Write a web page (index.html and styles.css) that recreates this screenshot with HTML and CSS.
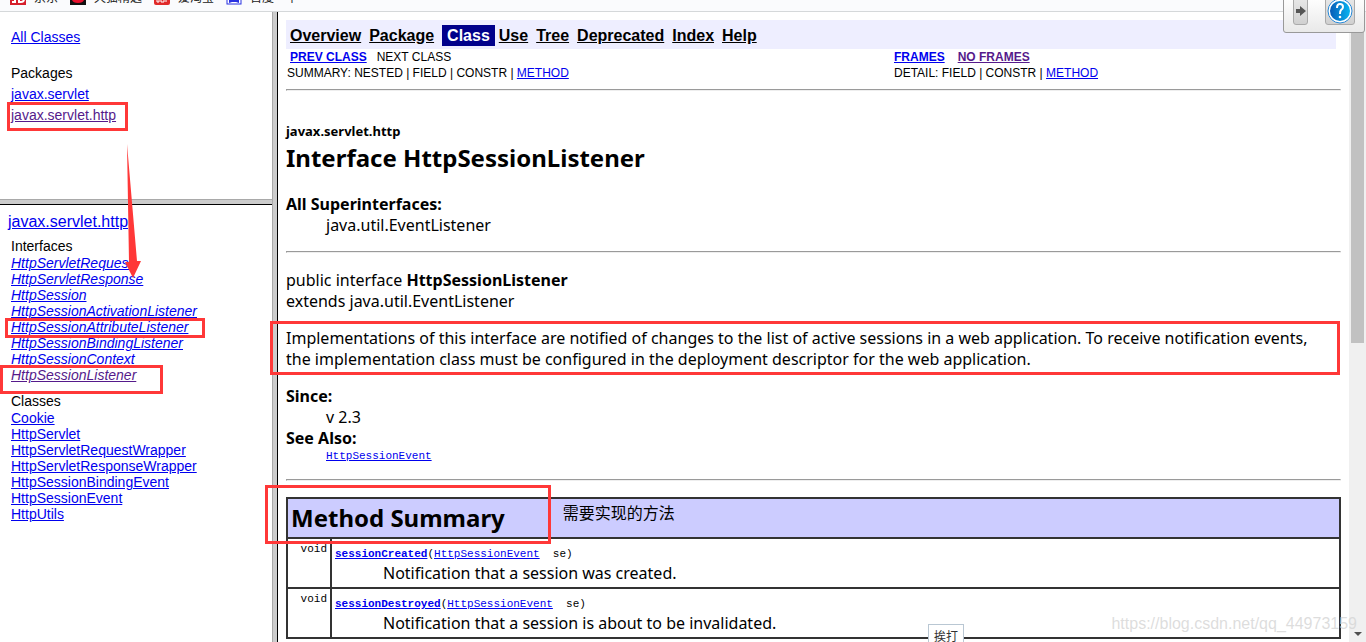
FILE: index.html
```html
<!DOCTYPE html>
<html lang="en">
<head>
<meta charset="utf-8">
<title>HttpSessionListener</title>
<link rel="stylesheet" href="styles.css">
</head>
<body class="browser">
<header class="bookmarks">
  <a class="bookmark" href="#"><svg width="16" height="16" viewBox="0 0 16 16"><rect width="16" height="16" fill="#d6202c"/><path d="M5 8v5H2M9 9v4h2q3 0 3-3" fill="none" stroke="#fff" stroke-width="2"/></svg>京东</a>
  <a class="bookmark" href="#"><svg width="16" height="16" viewBox="0 0 16 16"><rect width="16" height="16" fill="#111"/><path d="M2 7q6 3 12 0v4q-1 3-6 3t-6-3z" fill="#e8102d"/></svg>天猫精选</a>
  <a class="bookmark" href="#"><svg width="16" height="16" viewBox="0 0 16 16"><rect width="16" height="16" rx="2" fill="#e02a2a"/><path d="M3 10v3h2v-3M7 10v3h3v-3zM12 10v3" fill="none" stroke="#fff"/></svg>爱淘宝</a>
  <a class="bookmark" href="#"><svg width="16" height="16" viewBox="0 0 16 16"><rect x="1" y="1" width="14" height="14" fill="#fff" stroke="#2932e1"/><path d="M3 14v-4q5-5 10 0v4l-3-1H6z" fill="#2932e1"/></svg>百度</a>
  <a class="bookmark" href="#">个</a>
</header>
<div class="frames">
  <div class="sidebar">
    <nav class="packages">
      <a class="all" href="#">All Classes</a>
      <h2 class="label">Packages</h2>
      <a href="#">javax.servlet</a>
      <a class="visited" href="#">javax.servlet.http</a>
    </nav>
    <nav class="classes">
      <a class="package-title" href="#">javax.servlet.http</a>
      <h2 class="label">Interfaces</h2>
      <div class="list interfaces">
        <a href="#">HttpServletRequest</a>
        <a href="#">HttpServletResponse</a>
        <a href="#">HttpSession</a>
        <a href="#">HttpSessionActivationListener</a>
        <a href="#">HttpSessionAttributeListener</a>
        <a href="#">HttpSessionBindingListener</a>
        <a href="#">HttpSessionContext</a>
        <a class="visited" href="#">HttpSessionListener</a>
      </div>
      <h2 class="label">Classes</h2>
      <div class="list">
        <a href="#">Cookie</a>
        <a href="#">HttpServlet</a>
        <a href="#">HttpServletRequestWrapper</a>
        <a href="#">HttpServletResponseWrapper</a>
        <a href="#">HttpSessionBindingEvent</a>
        <a href="#">HttpSessionEvent</a>
        <a href="#">HttpUtils</a>
      </div>
    </nav>
  </div>
  <main class="doc">
    <nav class="navbar">
      <a href="#">Overview</a>
      <a href="#">Package</a>
      <span class="current">Class</span>
      <a href="#">Use</a>
      <a href="#">Tree</a>
      <a href="#">Deprecated</a>
      <a href="#">Index</a>
      <a href="#">Help</a>
    </nav>
    <div class="subnav">
      <div>
        <div class="moves"><a href="#">PREV CLASS</a><span>NEXT CLASS</span></div>
        <div>SUMMARY: NESTED | FIELD | CONSTR | <a href="#">METHOD</a></div>
      </div>
      <div>
        <div class="moves frames-links"><a href="#">FRAMES</a><a class="visited" href="#">NO FRAMES</a></div>
        <div>DETAIL: FIELD | CONSTR | <a href="#">METHOD</a></div>
      </div>
    </div>
    <hr>
    <h1 class="title"><span class="title-package">javax.servlet.http</span>Interface HttpSessionListener</h1>
    <dl>
      <dt>All Superinterfaces:</dt>
      <dd>java.util.EventListener</dd>
    </dl>
    <hr>
    <p class="signature">public interface <b>HttpSessionListener</b><br>extends java.util.EventListener</p>
    <p class="description">Implementations of this interface are notified of changes to the list of active sessions in a web application. To receive notification events, the implementation class must be configured in the deployment descriptor for the web application.</p>
    <dl>
      <dt>Since:</dt>
      <dd>v 2.3</dd>
      <dt>See Also:</dt>
      <dd class="code"><a href="#">HttpSessionEvent</a></dd>
    </dl>
    <hr>
    <table class="summary">
      <thead>
        <tr><th colspan="2"><div class="summary-head"><span>Method Summary</span><span class="remark" lang="zh">需要实现的方法</span></div></th></tr>
      </thead>
      <tbody>
        <tr>
          <td class="type">void</td>
          <td><div class="code"><b><a href="#">sessionCreated</a></b>(<a href="#">HttpSessionEvent</a>&nbsp; se)</div><p class="note">Notification that a session was created.</p></td>
        </tr>
        <tr>
          <td class="type">void</td>
          <td><div class="code"><b><a href="#">sessionDestroyed</a></b>(<a href="#">HttpSessionEvent</a>&nbsp; se)</div><p class="note">Notification that a session is about to be invalidated.</p></td>
        </tr>
      </tbody>
    </table>
  </main>
  <div class="scrollbar"><div class="thumb"></div><div class="scroll-down"></div></div>
</div>
<div class="mark mark-package"></div>
<div class="mark mark-attribute"></div>
<div class="mark mark-listener"></div>
<div class="mark mark-description"></div>
<div class="mark mark-summary"></div>
<svg class="arrow" width="18" height="136" viewBox="0 0 18 136"><path d="M3 0L13 117H17L9 134L1 118H5z" fill="#ff3838"/></svg>
<div class="toolbox">
  <button class="tool" aria-label="Next"><svg width="10" height="12" viewBox="0 0 10 12"><path d="M0 4h4V1l6 5-6 5V8H0z" fill="#555"/></svg></button>
  <button class="tool tool-help" aria-label="Help"><svg width="26" height="26" viewBox="0 0 26 26"><defs><linearGradient id="blue"><stop stop-color="#0757b4"/><stop offset="1" stop-color="#08b9f4"/></linearGradient></defs><circle cx="13" cy="13" r="11" fill="url(#blue)" stroke="#fff" stroke-width="2"/><circle cx="13" cy="13" r="12" fill="none" stroke="#2789d8"/><path d="M10 10q0-4 3-4t3 3q0 2-2 3-1 1-1 4" fill="none" stroke="#fff" stroke-width="2"/><circle cx="13" cy="19" r="1.3" fill="#fff"/></svg></button>
</div>
<div class="ime" lang="zh">挨打</div>
<div class="watermark">https://blog.csdn.net/qq_44973159</div>
</body>
</html>
```
FILE: styles.css
```css
* { box-sizing: border-box; }
.browser {
  margin: 0;
  height: 100vh;
  overflow: hidden;
  position: relative;
  display: flex;
  flex-direction: column;
  background: #fff;
  color: #000;
  font: 16px/21px "Noto Sans", "Noto Sans CJK SC", sans-serif;
}
a { color: #00e; text-decoration: underline; }
.visited { color: #551a8b; }
h1, h2, p, dl, dd { margin: 0; }
hr { margin: 0; border: 1px solid; border-color: #9a9a9a #eee #eee #9a9a9a; }

.bookmarks {
  flex: none;
  height: 12px;
  overflow: hidden;
  display: flex;
  align-items: flex-end;
  gap: 12px;
  padding: 0 10px 6px;
  background: #fafbfd;
  border-bottom: 1px solid #d5d8da;
  font: 12px/14px "Noto Sans CJK SC", sans-serif;
}
.bookmark { display: flex; align-items: center; gap: 8px; color: #222; text-decoration: none; }

.frames { flex: 1; min-height: 0; display: flex; }
.sidebar {
  flex: none;
  width: 278px;
  display: flex;
  flex-direction: column;
  border-right: 1px solid #000;
  box-shadow: inset -4px 0 #ccc, inset -5px 0 #a9a9a9;
  padding-right: 5px;
  font: 14px/16px "Liberation Sans", Arial, sans-serif;
}
.label { font-size: inherit; font-weight: normal; }
.packages {
  height: 187px;
  padding: 15px 11px;
  display: flex;
  flex-direction: column;
  align-items: flex-start;
  line-height: 21px;
}
.all { margin-bottom: 15px; }
.classes {
  flex: 1;
  border-top: 1px solid #a9a9a9;
  box-shadow: inset 0 4px #ccc, inset 0 5px #000;
  padding: 14px 8px;
}
.package-title { font-size: 16px; }
.classes .label { margin: 8px 3px 1px; }
.list { display: flex; flex-direction: column; align-items: flex-start; margin-left: 3px; }
.interfaces { font-style: italic; margin-bottom: 10px; }

.doc { flex: 1; min-width: 0; padding: 8px 8px 0; }
.navbar {
  display: flex;
  align-items: center;
  gap: 8px;
  height: 29px;
  margin-right: 5px;
  padding: 1px 0 0 4px;
  background: #eeeeff;
  font: bold 16px/21px "Liberation Sans", Arial, sans-serif;
}
.navbar a { color: #000; }
.current { padding: 0 5px; margin-right: -4px; background: #00008b; color: #fff; }
.subnav {
  display: grid;
  grid-template-columns: 607px 1fr;
  padding-left: 1px;
  margin-bottom: 8px;
  font: 12px/16px "Liberation Sans", Arial, sans-serif;
}
.moves { display: flex; gap: 10px; padding-left: 3px; }
.moves a { font-weight: bold; }
.frames-links { gap: 13px; padding-left: 0; }
.title { margin: 30px 0 20px; font-size: 24px; line-height: 33px; }
.title-package { display: block; font-size: 13px; line-height: 20px; }
dt { font-weight: bold; }
dd { margin-left: 40px; }
dl { margin-bottom: 15px; }
.signature { margin: 17px 0 16px; }
.description { margin-bottom: 16px; padding-right: 8px; }
.code { font: 11px/15px "Liberation Mono", "Courier New", monospace; }
.summary {
  width: 100%;
  margin-top: 16px;
  border-collapse: collapse;
  border: 2px solid #333;
}
.summary th, .summary td { border: 2px solid #333; text-align: left; vertical-align: top; padding: 3px; }
.summary th { background: #ccccff; }
.summary-head { display: flex; gap: 58px; font-size: 24px; line-height: 32px; }
.summary th .remark { font: 16px/20px "Noto Sans CJK SC", sans-serif; }
.summary .type { width: 44px; text-align: right; font: 11px/14px "Liberation Mono", monospace; }
.summary td .code { padding-top: 4px; line-height: 17px; }
.summary .note { margin-left: 48px; }

.scrollbar { flex: none; width: 17px; background: #f0f0f0; padding: 0 2px; display: flex; flex-direction: column; justify-content: space-between; }
.thumb { height: 331px; background: #c1c1c1; }
.scroll-down { align-self: center; margin-bottom: 6px; border: 4px solid transparent; border-top-color: #505050; border-bottom: 0; }

.mark { position: absolute; border: 3px solid #ff3838; }
.mark-package { left: 7px; top: 102px; width: 121px; height: 29px; }
.mark-attribute { left: 5px; top: 318px; width: 200px; height: 20px; }
.mark-listener { left: 0; top: 365px; width: 163px; height: 29px; }
.mark-description { left: 270px; top: 321px; right: 26px; height: 54px; }
.mark-summary { left: 265px; top: 485px; width: 286px; height: 59px; }
.arrow { position: absolute; left: 124px; top: 144px; }
.toolbox {
  position: absolute;
  top: -4px;
  right: 1px;
  width: 82px;
  height: 37px;
  display: flex;
  justify-content: space-between;
  align-items: flex-start;
  padding: 0 9px;
  border: 1px solid #999;
  border-radius: 3px;
  background: linear-gradient(#fff, #e9e9e9);
}
.tool {
  display: flex;
  align-items: center;
  justify-content: center;
  width: 15px;
  height: 28px;
  padding: 0;
  border: 1px solid #aaa;
  border-radius: 3px;
  background: linear-gradient(#e8e8e8, #d0d0d0);
}
.tool-help { width: 30px; }
.ime {
  position: absolute;
  left: 928px;
  top: 624px;
  padding: 0 5px;
  border: 1px solid #b9c7d3;
  background: #fff;
  color: #333;
  font: 12px/22px "Noto Sans CJK SC", sans-serif;
}
.watermark {
  position: absolute;
  right: 9px;
  top: 614px;
  color: rgba(215, 215, 215, 0.85);
  font: 16px/20px "Liberation Sans", Arial, sans-serif;
}
```
